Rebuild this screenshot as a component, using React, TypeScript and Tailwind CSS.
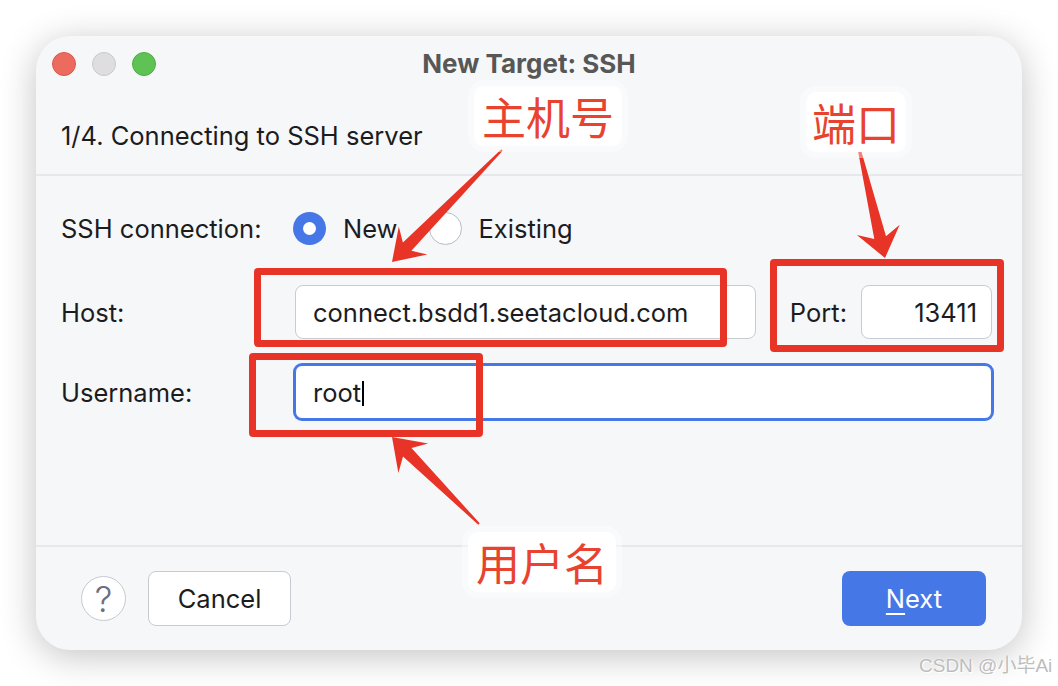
import React from 'react';

type Pt = [number, number];

// tapered callout arrow: thin at the tail, swept-back head at the tip
const arrowPoints = (tail: Pt, tip: Pt, headLen: number, headHalf: number, neckHalf = 6) => {
  const dx = tip[0] - tail[0];
  const dy = tip[1] - tail[1];
  const len = Math.hypot(dx, dy);
  const ux = dx / len;
  const uy = dy / len;
  const nx = -uy;
  const ny = ux;
  const at = (d: number, s: number): Pt => [tip[0] - ux * d + nx * s, tip[1] - uy * d + ny * s];
  const pts: Pt[] = [
    [tail[0] + nx * 1, tail[1] + ny * 1],
    at(headLen * 0.72, neckHalf),
    at(headLen, headHalf),
    tip,
    at(headLen, -headHalf),
    at(headLen * 0.72, -neckHalf),
    [tail[0] - nx * 1, tail[1] - ny * 1],
  ];
  return pts.map(p => `${p[0].toFixed(1)},${p[1].toFixed(1)}`).join(' ');
};

const arrows = [
  { tail: [502, 150] as Pt, tip: [392, 262] as Pt, len: 30, half: 20 },
  { tail: [857, 140] as Pt, tip: [885, 258] as Pt, len: 29, half: 22 },
  { tail: [479, 524] as Pt, tip: [392, 437] as Pt, len: 30, half: 21 },
];

const Radio = ({ checked, label }: { checked?: boolean; label: string }) => (
  <div className="flex items-center gap-[17px]">
    {checked ? (
      <span className="flex size-[33px] items-center justify-center rounded-full bg-[#4677e6]">
        <span className="size-[13px] rounded-full bg-white" />
      </span>
    ) : (
      <span className="size-[33px] rounded-full border-[1.5px] border-[#b9bbc5] bg-white" />
    )}
    <span className="pt-[2px]">{label}</span>
  </div>
);

export default function App() {
  return (
    <div className="relative h-[686px] w-[1058px] overflow-hidden bg-white pl-[36px] pt-[36px] font-['Inter','Noto_Sans',sans-serif] text-[#1c1c1e]">
      {/* Dialog window */}
      <div className="flex h-[614px] w-[986px] flex-col overflow-hidden rounded-[34px] bg-[#f6f7f9] shadow-[0_6px_36px_rgba(0,0,0,0.24)]">
        {/* Title bar */}
        <div className="flex h-[56px] shrink-0 items-center">
          <div className="flex w-[120px] items-center gap-[16px] pl-[16px]">
            <span className="size-[24px] rounded-full border border-[#d85a4f] bg-[#ec6a5e]" />
            <span className="size-[24px] rounded-full border border-[#c9c9cc] bg-[#dedee0]" />
            <span className="size-[24px] rounded-full border border-[#4fae45] bg-[#5ec254]" />
          </div>
          <div className="flex-1 pb-[2px] text-center text-[26px] font-bold text-[#575757]">New Target: SSH</div>
          <div className="w-[120px]" />
        </div>

        <div className="h-[82px] shrink-0 pl-[25px] pt-[29px] text-[25.5px] leading-[30px]">1/4. Connecting to SSH server</div>
        <div className="h-[2px] shrink-0 bg-[#e7e8eb]" />

        {/* Form */}
        <div className="flex h-[369px] shrink-0 flex-col pl-[25px] pr-[30px] pt-[35px] text-[25.5px]">
          <div className="flex h-[34px] items-center">
            <div className="w-[232px] pt-[2px]">SSH connection:</div>
            <div className="flex items-center gap-[31px]">
              <Radio checked label="New" />
              <Radio label="Existing" />
            </div>
          </div>

          <div className="mt-[40px] flex h-[54px] items-center">
            <div className="w-[234px] pt-[3px]">Host:</div>
            <div className="flex h-full flex-1 items-center rounded-[8px] border-[1.5px] border-[#c9cbd3] bg-white pl-[17px] pt-[3px]">
              connect.bsdd1.seetacloud.com
            </div>
            <div className="ml-[34px] pt-[3px]">Port:</div>
            <div className="ml-[14px] flex h-full w-[131px] items-center justify-end rounded-[8px] border-[1.5px] border-[#c9cbd3] bg-white pr-[14px] pt-[3px]">
              13411
            </div>
          </div>

          <div className="mt-[26px] flex h-[54px] items-center">
            <div className="w-[234px] pt-[3px]">Username:</div>
            <div className="flex h-full flex-1 items-center rounded-[7px] border border-[#4677e6] bg-white pl-[17px] pt-[3px] ring-2 ring-[#4677e6]">
              root
              <span className="ml-[1px] h-[25px] w-[2px] bg-black" />
            </div>
          </div>
        </div>
        <div className="h-[2px] shrink-0 bg-[#e7e8eb]" />

        {/* Footer */}
        <div className="flex items-center pl-[45px] pr-[36px] pt-[24px] text-[25.5px]">
          <button className="flex size-[45px] items-center justify-center rounded-full border-[1.5px] border-[#c6c8d1] bg-white pt-[2px] text-[35px] font-light text-[#6d6f7c]">
            ?
          </button>
          <button className="ml-[22px] h-[55px] w-[143px] rounded-[8px] border-[1.5px] border-[#c8cad3] bg-white pt-[2px]">Cancel</button>
          <button className="ml-auto h-[55px] w-[144px] rounded-[8px] bg-[#4677e6] pt-[2px] text-white">
            <span className="underline decoration-[2px] underline-offset-[5px]">N</span>ext
          </button>
        </div>
      </div>

      {/* Annotations */}
      <svg className="pointer-events-none absolute left-0 top-0" width="1058" height="686" viewBox="0 0 1058 686">
        {arrows.map((a, i) => (
          <polygon key={i} points={arrowPoints(a.tail, a.tip, a.len, a.half)} fill="#e83426" />
        ))}
      </svg>

      <div className="pointer-events-none absolute left-[254px] top-[268px] h-[79px] w-[473px] rounded-[4px] border-[7px] border-[#e83426]" />
      <div className="pointer-events-none absolute left-[770px] top-[259px] h-[93px] w-[234px] rounded-[4px] border-[7px] border-[#e83426]" />
      <div className="pointer-events-none absolute left-[249px] top-[353px] h-[84px] w-[234px] rounded-[4px] border-[7px] border-[#e83426]" />

      <div className="absolute left-[474px] top-[86px] flex h-[60px] w-[148px] items-center justify-center rounded-[10px] bg-white font-['Noto_Sans_CJK_SC',sans-serif] text-[44px] text-[#e8432e] ring-[6px] ring-white/40">
        主机号
      </div>
      <div className="absolute left-[806px] top-[92px] flex h-[60px] w-[100px] items-center justify-center rounded-[10px] bg-white font-['Noto_Sans_CJK_SC',sans-serif] text-[44px] text-[#e8432e] ring-[6px] ring-white/40">
        端口
      </div>
      <div className="absolute left-[468px] top-[532px] flex h-[60px] w-[148px] items-center justify-center rounded-[10px] bg-white font-['Noto_Sans_CJK_SC',sans-serif] text-[44px] text-[#e8432e] ring-[6px] ring-white/40">
        用户名
      </div>

      {/* Watermark */}
      <div className="absolute left-[919px] top-[655px] font-['Liberation_Sans','Noto_Sans_CJK_SC',sans-serif] text-[19px] leading-[22px] text-[#bdbdbd] [text-shadow:1px_1px_0_#fff,0_0_2px_#fff]">
        CSDN @小毕Ai
      </div>
    </div>
  );
}
